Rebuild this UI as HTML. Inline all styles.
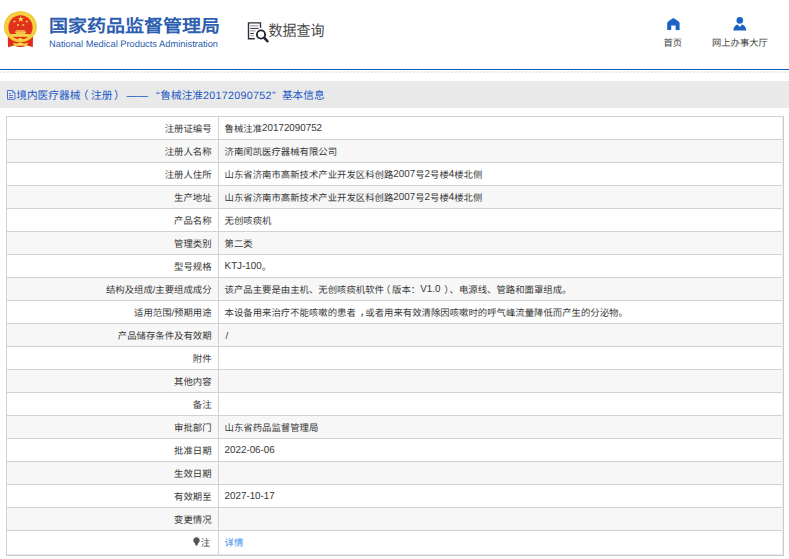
<!DOCTYPE html>
<html lang="zh-CN">
<head>
<meta charset="utf-8">
<style>
*{margin:0;padding:0;box-sizing:border-box;}
html,body{width:789px;height:559px;overflow:hidden;background:#fff;}
body{position:relative;font-family:"Liberation Sans",sans-serif;color:#333;text-rendering:geometricPrecision;}
.abs{position:absolute;white-space:nowrap;}
#title{left:49px;top:14.5px;font-size:19px;font-weight:900;color:#2d5eb0;line-height:24px;transform:scaleY(0.92);transform-origin:0 11px;}
#en{left:49px;top:37.5px;font-size:9.3px;color:#2b5cae;line-height:12px;}
#sq{left:268.5px;top:20.6px;font-size:14px;color:#4a4a4a;line-height:20px;transform:scaleY(1.09);transform-origin:0 50%;}
.nav{font-size:9.3px;color:#444;line-height:12px;}
#line1{left:0;top:69px;width:789px;height:1px;background:#0b60c1;}
#line2{left:0;top:72px;width:789px;height:1px;background:repeating-linear-gradient(90deg,#e2e2e2 0 2px,#fff 2px 3px);}
#bar{left:0;top:81px;width:789px;height:27px;background:#e9e9e9;}
.bt{top:88.5px;font-size:10.7px;color:#1a58c6;line-height:14px;}
.hl{left:6px;width:777px;height:1px;background:#d2d2d2;}

.lab{right:577.4px;font-size:9.4px;line-height:23px;color:#383838;}
.val{left:224.6px;font-size:9.4px;line-height:23px;color:#383838;}
.n{font-size:9.8px;letter-spacing:0;position:relative;top:0;line-height:1px;display:inline-block;transform:translateY(-0.6px) scaleY(1.03);transform-origin:0 0;}
.bulb{vertical-align:-1px;margin-right:1px;}
a{color:#3a8cf0;text-decoration:none;}
</style>
</head>
<body>
<svg class="abs" style="left:0;top:0" width="45" height="52" viewBox="0 0 45 52">
  <path d="M7.8 37 L33 37 L32.8 47 L27 45.5 Q20.4 48.5 13.8 45.5 L8 47.2 Z" fill="#e2291c"/>
  <ellipse cx="20.4" cy="26.8" rx="16.4" ry="15.6" fill="#f0bf2f"/>
  <ellipse cx="20.4" cy="26.8" rx="15.4" ry="14.6" fill="#f6d23f"/>
  <ellipse cx="20.5" cy="27.4" rx="12.1" ry="12.2" fill="#e4301f"/>
  <polygon points="20.8,15.9 21.6,18.2 24,18.2 22.1,19.6 22.8,21.9 20.8,20.5 18.8,21.9 19.5,19.6 17.6,18.2 20,18.2" fill="#f7d848"/>
  <circle cx="14.5" cy="21.5" r="1.1" fill="#f5cf45"/>
  <circle cx="26.8" cy="21.5" r="1.1" fill="#f5cf45"/>
  <circle cx="18" cy="25" r="1.1" fill="#f5cf45"/>
  <circle cx="23.3" cy="25" r="1.1" fill="#f5cf45"/>
  <rect x="16.2" y="30.3" width="8.6" height="1.2" fill="#f6d548"/>
  <rect x="15" y="31.5" width="11.1" height="1.4" fill="#f6d548"/>
  <rect x="16" y="32.9" width="9" height="1.1" fill="#eec040"/>
  <rect x="10.9" y="34" width="19" height="2.8" fill="#f6d548"/>
  <ellipse cx="20.3" cy="39.3" rx="2.2" ry="1.3" fill="#f6d548"/>
  <path d="M12.8 42.8 L16.5 43.5 Q20.3 42.4 24.2 43.5 L28.3 42.8 L26.5 46.2 Q20.3 45 14.5 46.2 Z" fill="#f4cf3e"/>
  <ellipse cx="20.3" cy="44" rx="2.8" ry="1.6" fill="#f8dc55"/>
</svg>
<div id="title" class="abs">国家药品监督管理局</div>
<div id="en" class="abs">National Medical Products Administration</div>
<svg class="abs" style="left:247px;top:21px" width="24" height="23" viewBox="0 0 24 23">
  <path d="M13.5 6.8 V1.9 H1.5 V17.7 H7.8" fill="none" stroke="#2e2e3a" stroke-width="1.4"/>
  <path d="M3.3 4.8 H11.5 M3.3 9.9 H8.5 M3.3 14.8 H6.8" stroke="#8a8a92" stroke-width="1"/>
  <path d="M3.3 7.4 H11.5 M3.3 12.5 H6.8" stroke="#2e2e3a" stroke-width="1"/>
  <circle cx="14" cy="13.5" r="4.1" fill="#fff" stroke="#23263a" stroke-width="1.9"/>
  <path d="M17.3 16.9 L20.4 20.2" stroke="#23263a" stroke-width="2.6" stroke-linecap="round"/>
</svg>
<div id="sq" class="abs">数据查询</div>
<svg class="abs" style="left:666.5px;top:18px" width="13" height="12" viewBox="0 0 13 12">
  <path d="M0.2 5.2 Q0.2 4.1 1.2 3.4 L5.4 0.5 Q6.4 -0.1 7.4 0.5 L11.6 3.4 Q12.6 4.1 12.6 5.2 V11.9 H8.6 V7.6 H4.2 V11.9 H0.2 Z" fill="#1a62c4"/>
</svg>
<div class="abs nav" style="left:663.5px;top:36.5px">首页</div>
<svg class="abs" style="left:733px;top:17px" width="14" height="14" viewBox="0 0 14 14">
  <circle cx="6.8" cy="3.4" r="3.3" fill="#1a62c4"/>
  <path d="M0.3 13.5 Q0.8 8.3 4.6 7.4 L6.8 10 L9 7.4 Q12.8 8.3 13.3 13.5 Z" fill="#1a62c4"/>
</svg>
<div class="abs nav" style="left:712px;top:36.5px">网上办事大厅</div>

<div id="line1" class="abs"></div>
<svg class="abs" style="left:0;top:71px" width="789" height="2"><defs><pattern id="dp" width="3.5" height="2" patternUnits="userSpaceOnUse"><path d="M0.3 2 L2.2 0" stroke="#d8d8d8" stroke-width="0.9"/></pattern></defs><rect width="789" height="2" fill="url(#dp)"/></svg>
<div id="bar" class="abs"></div>
<svg class="abs" style="left:4px;top:87px" width="16" height="16" viewBox="0 0 16 16">
  <path d="M3.5 3.5 H8.7 L11 5.8 V12.3 H3.5 Z" fill="none" stroke="#3f74d4" stroke-width="1"/>
  <path d="M8.6 3.8 V5.9 H10.8" fill="none" stroke="#3f74d4" stroke-width="0.8"/>
  <path d="M5 6.5 H7 M5 8.5 H9 M5 10.5 H9" stroke="#5a62c8" stroke-width="0.9"/>
</svg>
<div class="abs bt" style="left:16.2px">境内医疗器械<span style="margin-left:-2.5px;margin-right:2.5px">（</span>注册<span style="margin-left:1.6px">）</span></div>
<div class="abs bt" style="left:126.5px">——</div>
<div class="abs bt" style="left:156px">“</div>
<div class="abs bt" style="left:160.3px">鲁械注准<span style="letter-spacing:0.3px">20172090752</span></div>
<div class="abs bt" style="left:272px">”</div>
<div class="abs bt" style="left:281.9px">基本信息</div>
<div class="abs" style="left:7px;top:140px;width:775px;height:22px;background:#f7f7f7"></div>
<div class="abs" style="left:7px;top:186px;width:775px;height:22px;background:#f7f7f7"></div>
<div class="abs" style="left:7px;top:232px;width:775px;height:22px;background:#f7f7f7"></div>
<div class="abs" style="left:7px;top:278px;width:775px;height:22px;background:#f7f7f7"></div>
<div class="abs" style="left:7px;top:324px;width:775px;height:22px;background:#f7f7f7"></div>
<div class="abs" style="left:7px;top:370px;width:775px;height:22px;background:#f7f7f7"></div>
<div class="abs" style="left:7px;top:416px;width:775px;height:22px;background:#f7f7f7"></div>
<div class="abs" style="left:7px;top:462px;width:775px;height:22px;background:#f7f7f7"></div>
<div class="abs" style="left:7px;top:508px;width:775px;height:22px;background:#f7f7f7"></div>
<div class="abs" style="left:6px;top:116px;width:778px;height:1px;background:#d2d2d2"></div>
<div class="abs" style="left:6px;top:139px;width:776px;height:1px;background:#d2d2d2"></div>
<div class="abs" style="left:6px;top:162px;width:776px;height:1px;background:#d2d2d2"></div>
<div class="abs" style="left:6px;top:185px;width:776px;height:1px;background:#d2d2d2"></div>
<div class="abs" style="left:6px;top:208px;width:776px;height:1px;background:#d2d2d2"></div>
<div class="abs" style="left:6px;top:231px;width:776px;height:1px;background:#d2d2d2"></div>
<div class="abs" style="left:6px;top:254px;width:776px;height:1px;background:#d2d2d2"></div>
<div class="abs" style="left:6px;top:277px;width:776px;height:1px;background:#d2d2d2"></div>
<div class="abs" style="left:6px;top:300px;width:776px;height:1px;background:#d2d2d2"></div>
<div class="abs" style="left:6px;top:323px;width:776px;height:1px;background:#d2d2d2"></div>
<div class="abs" style="left:6px;top:346px;width:776px;height:1px;background:#d2d2d2"></div>
<div class="abs" style="left:6px;top:369px;width:776px;height:1px;background:#d2d2d2"></div>
<div class="abs" style="left:6px;top:392px;width:776px;height:1px;background:#d2d2d2"></div>
<div class="abs" style="left:6px;top:415px;width:776px;height:1px;background:#d2d2d2"></div>
<div class="abs" style="left:6px;top:438px;width:776px;height:1px;background:#d2d2d2"></div>
<div class="abs" style="left:6px;top:461px;width:776px;height:1px;background:#d2d2d2"></div>
<div class="abs" style="left:6px;top:484px;width:776px;height:1px;background:#d2d2d2"></div>
<div class="abs" style="left:6px;top:507px;width:776px;height:1px;background:#d2d2d2"></div>
<div class="abs" style="left:6px;top:530px;width:776px;height:1px;background:#d2d2d2"></div>
<div class="abs" style="left:6px;top:554px;width:777px;height:1px;background:#e9ebf2"></div>
<div class="abs" style="left:6px;top:555px;width:778px;height:1px;background:#cbcbcb"></div>
<div class="abs" style="left:6px;top:116px;width:1px;height:440px;background:#d2d2d2"></div>
<div class="abs" style="left:218px;top:116px;width:1px;height:439px;background:#d2d2d2"></div>
<div class="abs" style="left:782px;top:117px;width:1px;height:438px;background:#e9ebf2"></div>
<div class="abs" style="left:783px;top:116px;width:1px;height:440px;background:#cbcbcb"></div>
<div class="abs lab" style="top:117.0px;">注册证编号</div>
<div class="abs val" style="top:117.0px">鲁械注准<span class=n>20172090752</span></div>
<div class="abs lab" style="top:140.0px;">注册人名称</div>
<div class="abs val" style="top:140.0px">济南闰凯医疗器械有限公司</div>
<div class="abs lab" style="top:163.0px;">注册人住所</div>
<div class="abs val" style="top:163.0px">山东省济南市高新技术产业开发区科创路<span class=n>2007</span>号<span class=n>2</span>号楼<span class=n>4</span>楼北侧</div>
<div class="abs lab" style="top:186.0px;">生产地址</div>
<div class="abs val" style="top:186.0px">山东省济南市高新技术产业开发区科创路<span class=n>2007</span>号<span class=n>2</span>号楼<span class=n>4</span>楼北侧</div>
<div class="abs lab" style="top:209.0px;">产品名称</div>
<div class="abs val" style="top:209.0px">无创咳痰机</div>
<div class="abs lab" style="top:232.0px;">管理类别</div>
<div class="abs val" style="top:232.0px">第二类</div>
<div class="abs lab" style="top:255.0px;">型号规格</div>
<div class="abs val" style="top:255.0px"><span class=n>KTJ-100</span>。</div>
<div class="abs lab" style="top:278.0px;">结构及组成/主要组成成分</div>
<div class="abs val" style="top:278.0px">该产品主要是由主机、无创咳痰机软件<span style='margin-left:-3px;margin-right:1.7px'>（</span>版本：<span class=n>V1.0</span><span style='margin-left:3.9px;margin-right:0.6px'>）</span>、电源线、管路和面罩组成。</div>
<div class="abs lab" style="top:301.0px;">适用范围/预期用途</div>
<div class="abs val" style="top:301.0px">本设备用来治疗不能咳嗽的患者<span style='margin-left:4px;margin-right:-4px'>，</span>或者用来有效清除因咳嗽时的呼气峰流量降低而产生的分泌物。</div>
<div class="abs lab" style="top:324.0px;">产品储存条件及有效期</div>
<div class="abs val" style="top:324.0px"><span style='position:relative;top:1px;left:0.8px;font-size:9.8px'><span class=n>/</span></span></div>
<div class="abs lab" style="top:347.0px;">附件</div>
<div class="abs lab" style="top:370.0px;">其他内容</div>
<div class="abs lab" style="top:393.0px;">备注</div>
<div class="abs lab" style="top:416.0px;">审批部门</div>
<div class="abs val" style="top:416.0px">山东省药品监督管理局</div>
<div class="abs lab" style="top:439.0px;">批准日期</div>
<div class="abs val" style="top:439.0px"><span class=n>2022-06-06</span></div>
<div class="abs lab" style="top:462.0px;">生效日期</div>
<div class="abs lab" style="top:485.0px;">有效期至</div>
<div class="abs val" style="top:485.0px"><span class=n>2027-10-17</span></div>
<div class="abs lab" style="top:508.0px;">变更情况</div>
<div class="abs lab" style="top:531.0px;margin-right:1.5px;"><svg class="bulb" width="7" height="10" viewBox="0 0 7 10"><path d="M3.5 0.3 C1.5 0.3 0.3 1.8 0.3 3.5 C0.3 5 1.4 5.8 2.2 6.8 L2.4 8.2 H4.6 L4.8 6.8 C5.6 5.8 6.7 5 6.7 3.5 C6.7 1.8 5.5 0.3 3.5 0.3 Z" fill="#555"/><path d="M2.6 8.8 H4.4" stroke="#999" stroke-width="0.8"/></svg>注</div>
<div class="abs val" style="top:531.0px"><a>详情</a></div>
</body>
</html>
